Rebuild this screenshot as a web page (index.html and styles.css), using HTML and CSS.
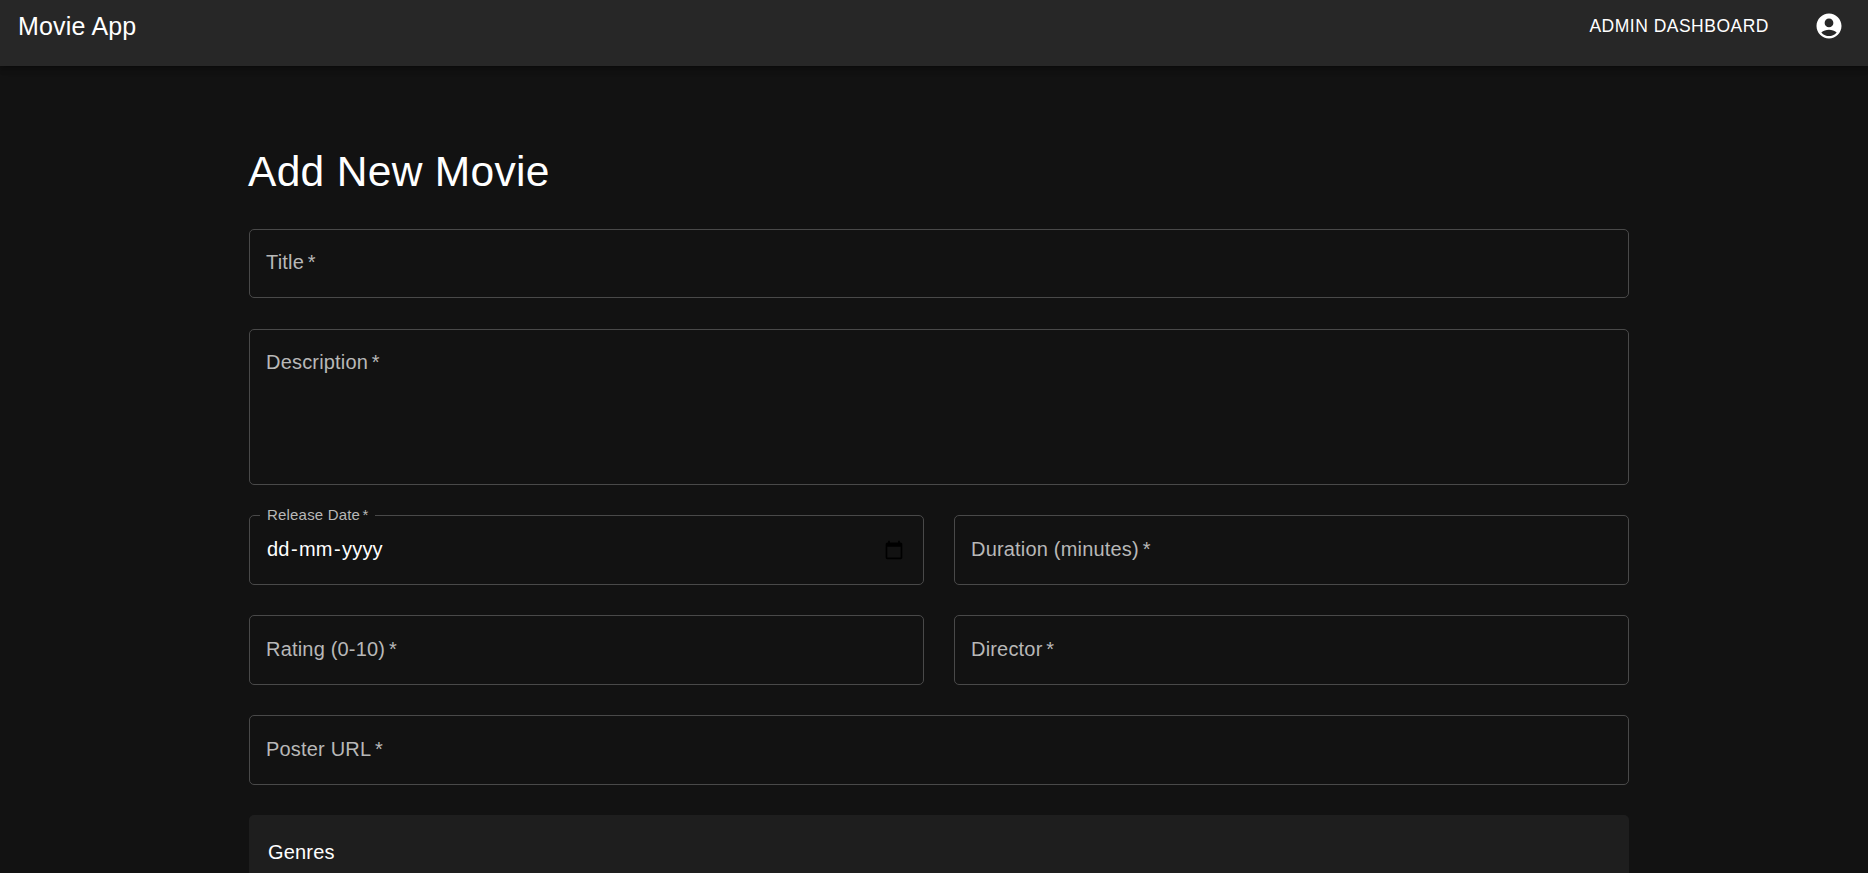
FILE: index.html
```html
<!DOCTYPE html>
<html lang="en">
<head>
<meta charset="utf-8">
<title>Movie App</title>
<link rel="stylesheet" href="styles.css">
</head>
<body>
<header class="appbar">
  <div class="brand">Movie App</div>
  <nav class="nav">
    <a class="nav-link">Admin Dashboard</a>
    <svg class="avatar" viewBox="0 0 24 24"><path d="M12 2C6.48 2 2 6.48 2 12s4.48 10 10 10 10-4.48 10-10S17.52 2 12 2m0 4c1.93 0 3.5 1.57 3.5 3.5S13.93 13 12 13s-3.5-1.57-3.5-3.5S10.07 6 12 6m0 14c-2.03 0-4.43-.82-6.14-2.88C7.55 15.8 9.68 15 12 15s4.45.8 6.14 2.12C16.43 19.18 14.03 20 12 20"/></svg>
  </nav>
</header>
<main class="container">
  <h1 class="heading">Add New Movie</h1>
  <form class="form">
    <div class="field field-title wide"><span class="label">Title<span class="star"> *</span></span></div>
    <div class="field field-description wide"><span class="label">Description<span class="star"> *</span></span></div>
    <div class="field"><span class="float-label">Release Date<span class="star"> *</span></span><span class="date"><span>dd</span><span>-</span><span>mm</span><span>-</span><span>yyyy</span></span>
      <svg class="calendar" viewBox="0 0 24 24"><path d="M20 3h-1V1h-2v2H7V1H5v2H4c-1.1 0-2 .9-2 2v16c0 1.1.9 2 2 2h16c1.1 0 2-.9 2-2V5c0-1.1-.9-2-2-2zm0 18H4V8h16v13z"/></svg>
    </div>
    <div class="field"><span class="label">Duration (minutes)<span class="star"> *</span></span></div>
    <div class="field"><span class="label">Rating (0-10)<span class="star"> *</span></span></div>
    <div class="field"><span class="label">Director<span class="star"> *</span></span></div>
    <div class="field wide"><span class="label">Poster URL<span class="star"> *</span></span></div>
    <section class="genres wide"><h2 class="genres-title">Genres</h2></section>
  </form>
</main>
</body>
</html>
```
FILE: styles.css
```css
* { box-sizing: border-box; }
body {
  margin: 0;
  height: 873px;
  overflow: hidden;
  background: #121212;
  color: #fff;
  font-family: "Liberation Sans", Arial, sans-serif;
  font-size: 20px;
  letter-spacing: 0.00938em;
}
.appbar {
  display: flex;
  justify-content: space-between;
  align-items: flex-start;
  height: 66px;
  padding: 6px 24px 0 18px;
  background: #272727;
  box-shadow: 0 2px 4px -1px rgba(0,0,0,.2), 0 4px 5px rgba(0,0,0,.14), 0 1px 10px rgba(0,0,0,.12);
}
.brand { font-size: 25px; line-height: 40px; letter-spacing: 0.0075em; }
.nav { display: flex; align-items: center; height: 40px; gap: 45px; }
.nav-link { font-size: 17.5px; letter-spacing: 0.02857em; text-transform: uppercase; }
.avatar { width: 30px; height: 30px; fill: #fff; }
.container { width: 1380px; margin: 0 auto 0 249px; padding-top: 79px; }
.heading {
  margin: 0 0 31px -1px;
  font-size: 42.5px;
  font-weight: 400;
  line-height: 53px;
  letter-spacing: 0.00735em;
}
.form { display: grid; grid-template-columns: 1fr 1fr; gap: 30px; }
.wide { grid-column: 1 / -1; }
.field {
  position: relative;
  display: flex;
  justify-content: space-between;
  height: 70px;
  padding: 19px 19px 0 16px;
  border: 1px solid #494949;
  border-radius: 5px;
}
.field-title { height: 69px; margin-bottom: 1px; padding-top: 18px; }
.field-description { height: 156px; padding-top: 18px; }
.label { color: #b8b8b8; line-height: 29px; }
.star { margin-left: -2px; }
.float-label {
  position: absolute;
  top: -12px;
  left: 10px;
  padding: 0 6px 0 7px;
  background: #121212;
  color: #b8b8b8;
  font-size: 15px;
  line-height: 21px;
}
.date { display: flex; gap: 1.25px; padding-left: 1px; line-height: 29px; }
.calendar { width: 20px; height: 20px; margin-top: 5px; fill: #000; }
.genres { height: 58px; padding: 20px 19px 0; border-radius: 5px 5px 0 0; background: #1e1e1e; }
.genres-title { margin: 0; font-size: 20px; font-weight: 400; line-height: 35px; }
```
